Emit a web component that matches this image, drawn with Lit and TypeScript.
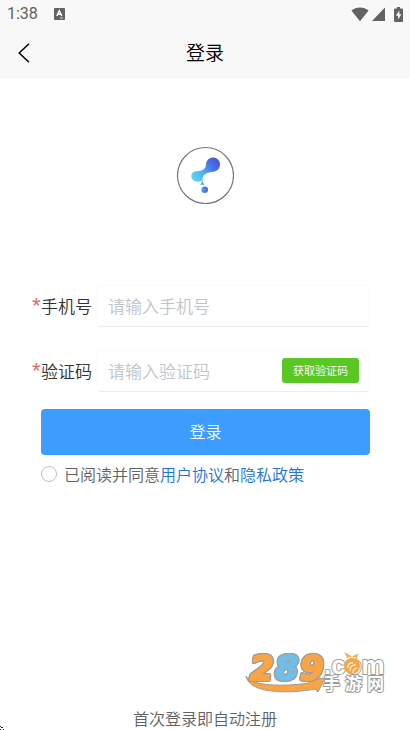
import { LitElement, html, css } from "lit";
import { customElement } from "lit/decorators.js";

@customElement("status-bar")
class StatusBar extends LitElement {
  static styles = css`
    :host {
      display: flex;
      align-items: center;
      justify-content: space-between;
      height: 28px;
      padding: 0 7px;
      color: #626262;
      font: 16px/28px Roboto, sans-serif;
    }
    .side {
      display: flex;
      align-items: center;
    }
    .start {
      gap: 16px;
    }
    .end {
      gap: 3px;
    }
    .battery {
      margin-left: 6px;
    }
    svg {
      display: block;
    }
  `;
  render() {
    return html`
      <div class="side start">
        <span>1:38</span>
        <svg width="11" height="12" viewBox="0 0 11 12" aria-hidden="true">
          <rect width="11" height="12" rx="1" fill="#626262" />
          <path d="M2.8 8 5.3 2.6 7.8 8M3.7 6.3h3.2" fill="none" stroke="#fff" stroke-width="1.4" />
          <path d="M6 10h3" stroke="#ddd" stroke-width="1" />
        </svg>
      </div>
      <div class="side end">
        <svg width="18" height="15" viewBox="0 0 18 15" aria-hidden="true">
          <path d="M.4 3.6C5.2-.4 12.800-.4 17.600 3.600L9 14.300Z" fill="#626262" />
        </svg>
        <svg width="13" height="14" viewBox="0 0 13 14" aria-hidden="true">
          <path d="M13 .5V14H0Z" fill="#626262" />
        </svg>
        <svg class="battery" width="9" height="15" viewBox="0 0 9 15" aria-hidden="true">
          <path d="M3 0h3v1.500h2q1 0 1 1V14q0 1-1 1H1q-1 0-1-1V2.500q0-1 1-1h2Z" fill="#626262" />
          <path d="M5.300 3.500 2 8.700h2.200V12.500L7.300 7.300H5.300Z" fill="#fff" />
        </svg>
      </div>
    `;
  }
}

@customElement("brand-logo")
class BrandLogo extends LitElement {
  static styles = css`
    :host,
    svg {
      display: block;
    }
  `;
  render() {
    return html`
      <svg width="58" height="58" viewBox="0 0 58 58" role="img" aria-label="logo">
        <defs>
          <linearGradient id="g" x1="15" y1="36" x2="43" y2="14" gradientUnits="userSpaceOnUse">
            <stop offset="0" stop-color="#62dcf4" />
            <stop offset="0.4" stop-color="#52b4ee" />
            <stop offset="0.75" stop-color="#4570e4" />
            <stop offset="1" stop-color="#4a50dc" />
          </linearGradient>
          <linearGradient id="d" x1="24" y1="0" x2="32" y2="0" gradientUnits="userSpaceOnUse">
            <stop offset="0" stop-color="#50b4f0" />
            <stop offset="1" stop-color="#4560e2" />
          </linearGradient>
        </defs>
        <circle cx="29.500" cy="29.500" r="28" fill="#fff" stroke="#777" stroke-width="1.2" />
        <path
          fill="url(#g)"
          d="M37 11.500C41 11.500 44 14.500 44 18.200C44 22.500 41 25.300 37.300 25.700C34 26 29.500 27 27.700 29.500C26.300 31.500 26.800 33 26.300 34.500C25 35.700 22.500 35.800 20 35.500C17 35 15.200 32.800 15.300 30.300C15.500 27.500 17.300 25.500 20 25.300C24 25.200 27.500 24.500 29.300 21.500C30.300 19.500 29.600 17.500 30.700 15.300C32 12.800 34.300 11.500 37 11.500Z"
        />
        <path fill="#49a4ec" d="M26.300 34C26.500 36 27.500 37.600 28.500 38.800H24.300C25.300 37.500 26 36 26.300 34Z" />
        <circle cx="28.700" cy="43.700" r="3.300" fill="url(#d)" />
      </svg>
    `;
  }
}

@customElement("site-mark")
class SiteMark extends LitElement {
  static styles = css`
    :host,
    svg {
      display: block;
    }
    svg {
      overflow: visible;
    }
    text {
      stroke-linejoin: round;
      font-weight: 700;
    }
    .outlined {
      filter: drop-shadow(1px 0 #a09c98) drop-shadow(-1px 0 #a09c98) drop-shadow(0 1px #a09c98)
        drop-shadow(0 -1px #a09c98);
    }
    .num {
      font-family: "DejaVu Sans", sans-serif;
      font-size: 34px;
      font-style: italic;
      stroke-width: 2px;
    }
    .orange {
      fill: #f9a545;
      stroke: #f9a545;
    }
    .blue {
      fill: #70bfe9;
      stroke: #70bfe9;
    }
    .com,
    .cn {
      fill: #fff;
      paint-order: stroke;
      stroke: #a09c98;
      stroke-width: 2px;
    }
    .com {
      font-family: "Liberation Sans", Arial, sans-serif;
      font-size: 26px;
    }
    .cn {
      font-family: "Noto Sans CJK SC", sans-serif;
      font-size: 17px;
    }
  `;
  render() {
    return html`
      <svg width="142" height="42" viewBox="0 0 142 42">
        <path
          d="M1 24C6 34 38 35 64 31L62 28L80 26L73 40L70 37C44 42 4 42 1 24Z"
          fill="#f9a545"
          stroke="#a09c98"
          stroke-width="1"
        />
        <g class="outlined"><text class="num orange" x="5" y="28">2</text></g>
        <g class="outlined"><text class="num blue" x="30" y="28">8</text></g>
        <g class="outlined"><text class="num orange" x="55" y="28">9</text></g>
        <text class="com" x="79" y="22">.com</text>
        <circle cx="107" cy="14" r="8" fill="#f9a545" />
        <path d="M103 6 101 2 106 5M108 5 112 3 111 7" fill="none" stroke="#f9a545" stroke-width="1.500" />
        <path d="M103 16a4 4 0 0 1 5-5M105 19a5 5 0 0 1 6-6M108 21a5 5 0 0 1 4-5" fill="none" stroke="#fff" stroke-width="1.200" />
        <text class="cn" x="78 100 122" y="38">手游网</text>
      </svg>
    `;
  }
}

@customElement("app-root")
class AppRoot extends LitElement {
  static styles = css`
    :host {
      display: flex;
      flex-direction: column;
      position: relative;
      box-sizing: border-box;
      min-height: 100vh;
      background: #fff;
      color: #303133;
      font-family: "Noto Sans CJK SC", sans-serif;
      font-weight: 350;
    }
    button,
    input {
      font-family: inherit;
      font-weight: inherit;
      margin: 0;
    }
    header {
      background: #f8f8f8;
    }
    nav {
      display: grid;
      grid-template-columns: 48px 1fr 48px;
      align-items: center;
      height: 50px;
    }
    .back {
      display: flex;
      align-items: center;
      justify-content: center;
      height: 50px;
      padding: 0;
      border: 0;
      background: none;
    }
    h1 {
      margin: 0;
      color: #000;
      font-size: 19px;
      font-weight: inherit;
      line-height: 28px;
      padding-bottom: 2px;
      text-align: center;
    }
    .logo {
      display: flex;
      justify-content: center;
      padding: 68px 0 81px;
    }
    form {
      display: flex;
      flex-direction: column;
      padding: 0 40px 0 32px;
    }
    .row {
      display: flex;
      align-items: center;
      gap: 5px;
      margin-bottom: 23px;
    }
    .row.last {
      margin-bottom: 17px;
    }
    label.name {
      display: flex;
      font-size: 17px;
      line-height: 24px;
      white-space: nowrap;
    }
    .star {
      width: 9px;
      color: #e26767;
      font-family: "Liberation Sans", Arial, sans-serif;
      font-size: 22px;
      line-height: 24px;
      height: 24px;
    }
    .field {
      display: flex;
      align-items: center;
      flex: 1;
      min-width: 0;
      box-sizing: border-box;
      height: 42px;
      padding: 0 10px;
      border: 1px solid #fbfbfb;
      border-bottom-color: #ececec;
      border-radius: 4px;
    }
    .field input {
      flex: 1;
      min-width: 0;
      width: 0;
      height: 40px;
      padding: 0 0 2px;
      box-sizing: border-box;
      border: 0;
      outline: 0;
      background: none;
      color: #303133;
      font-size: 17px;
    }
    .field input::placeholder {
      color: #c0c4cc;
      opacity: 1;
    }
    .code {
      height: 25px;
      margin-bottom: 1px;
      padding: 0 11px 2px;
      border: 0;
      border-radius: 3px;
      background: #5ac725;
      color: #fff;
      font-size: 11px;
      line-height: 22px;
    }
    .submit {
      height: 46px;
      margin-left: 9px;
      padding: 0 0 3px;
      border: 0;
      border-radius: 4px;
      background: #3c9cff;
      color: #fff;
      font-size: 16px;
    }
    .terms {
      display: flex;
      align-items: center;
      gap: 7px;
      margin: 7px 0 0 9px;
      color: #606266;
      font-size: 16px;
      line-height: 24px;
    }
    .terms input {
      appearance: none;
      flex: none;
      width: 16px;
      height: 16px;
      border: 1px solid #c0c0c0;
      border-radius: 50%;
    }
    .terms input:checked {
      background: #3c9cff;
    }
    a {
      color: #2074d4;
      text-decoration: none;
    }
    footer {
      margin-top: auto;
      padding-bottom: 1px;
      color: #606266;
      font-size: 16px;
      line-height: 22px;
      text-align: center;
    }
    .mark {
      position: absolute;
      right: 23px;
      bottom: 36px;
    }
    .speck {
      position: absolute;
      left: 0;
      bottom: 0;
    }
  `;
  render() {
    return html`
      <header>
        <status-bar></status-bar>
        <nav>
          <button class="back" type="button" aria-label="返回">
            <svg width="12" height="20" viewBox="0 0 12 20" aria-hidden="true">
              <path d="M11 .7 1.200 10 11 19.300" fill="none" stroke="#000" stroke-width="1.500" />
            </svg>
          </button>
          <h1>登录</h1>
        </nav>
      </header>
      <main>
        <div class="logo"><brand-logo></brand-logo></div>
        <form>
          <div class="row">
            <label class="name" for="phone"><span class="star">*</span>手机号</label>
            <div class="field">
              <input id="phone" type="tel" placeholder="请输入手机号" />
            </div>
          </div>
          <div class="row last">
            <label class="name" for="code"><span class="star">*</span>验证码</label>
            <div class="field">
              <input id="code" type="text" placeholder="请输入验证码" />
              <button class="code" type="button">获取验证码</button>
            </div>
          </div>
          <button class="submit" type="button">登录</button>
          <div class="terms">
            <input id="agree" type="radio" />
            <label for="agree">已阅读并同意<a href="#user">用户协议</a>和<a href="#privacy">隐私政策</a></label>
          </div>
        </form>
      </main>
      <footer>首次登录即自动注册</footer>
      <site-mark class="mark"></site-mark>
      <svg class="speck" width="5" height="4" viewBox="0 0 5 4" aria-hidden="true">
        <path d="M0 0h1v1h-1zM1 1h1v1h-1zM2 2h1v-1h-1zM3 3h1v1h-1zM0 3h1v1h-1z" fill="#222" />
      </svg>
    `;
  }
}
